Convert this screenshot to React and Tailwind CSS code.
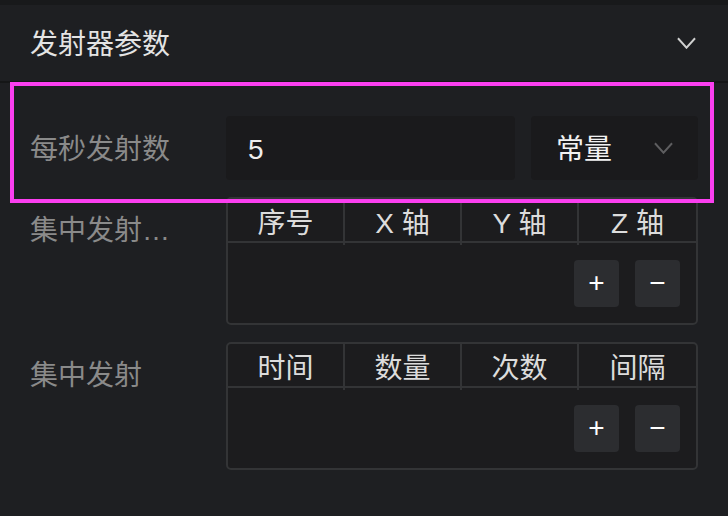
import React from 'react';

const font = { fontFamily: '"Liberation Sans", "Noto Sans CJK SC", sans-serif' };

function Chevron({ className }) {
  return (
    <svg viewBox="0 0 20 12" className={className} fill="none" stroke="currentColor" strokeWidth="2">
      <path d="M1 1 L10 11 L19 1" />
    </svg>
  );
}

function Row({ label, children }) {
  return (
    <div className="flex items-start">
      <div className="w-[226px] shrink-0 pl-[30px] pr-[36px]">
        <div className="h-[64px] leading-[68px] text-[28px] text-[#8a8a8a] truncate">{label}</div>
      </div>
      <div className="flex-1 pr-[30px]">{children}</div>
    </div>
  );
}

function Table({ cols }) {
  return (
    <div className="rounded-[5px] border-2 border-[#333436] bg-[#1c1c1e]">
      <div className="grid grid-cols-4 h-[44px] border-b-2 border-[#333436]">
        {cols.map((c, i) => (
          <div
            key={c}
            className={
              'flex items-center justify-center pt-[4px] text-[28px] text-[#dcdcdc] whitespace-pre ' +
              (i < 3 ? 'border-r-2 border-[#333436]' : '')
            }
          >
            {c}
          </div>
        ))}
      </div>
      <div className="h-[80px] flex items-center justify-end gap-4 pr-[16px]">
        <button className="w-[45px] h-[47px] rounded-[4px] bg-[#2c2d30] text-white text-[28px] leading-none flex items-center justify-center">+</button>
        <button className="w-[45px] h-[47px] rounded-[4px] bg-[#2c2d30] text-white text-[28px] leading-none flex items-center justify-center">−</button>
      </div>
    </div>
  );
}

export default function App() {
  return (
    <div className="relative w-[728px] h-[516px] overflow-hidden bg-[#1e1f22]" style={font}>
      <div className="h-[5px] bg-[#18191b]" />
      <div className="h-[76px] flex items-center justify-between pl-[30px] pr-[32px]">
        <div className="text-[28px] text-[#e4e4e4] pt-[4px]">发射器参数</div>
        <Chevron className="w-[19px] h-[12px] text-[#d0d0d0]" />
      </div>
      <div className="h-[2px] bg-[#151617]" />

      <div className="flex flex-col gap-[17px] pt-[33px]">
        <Row label="每秒发射数">
          <div className="flex gap-4">
            <div className="w-[289px] h-[64px] rounded-[4px] bg-[#1a1a1c] flex items-center pl-[22px] pt-[4px] text-[28px] text-[#eeeeee]">5</div>
            <div className="flex-1 h-[64px] rounded-[4px] bg-[#1a1a1c] flex items-center justify-between pl-[25px] pr-[25px]">
              <span className="text-[28px] text-[#f2f2f2] pt-[4px]">常量</span>
              <Chevron className="w-[19px] h-[12px] text-[#5e5e60]" />
            </div>
          </div>
        </Row>
        <Row label="集中发射位置">
          <Table cols={['序号', 'X 轴', 'Y 轴', 'Z 轴']} />
        </Row>
        <Row label="集中发射">
          <Table cols={['时间', '数量', '次数', '间隔']} />
        </Row>
      </div>

      <div className="absolute left-[10px] top-[82px] w-[704px] h-[121px] border-4 border-[#fb3ff0]" />
    </div>
  );
}
